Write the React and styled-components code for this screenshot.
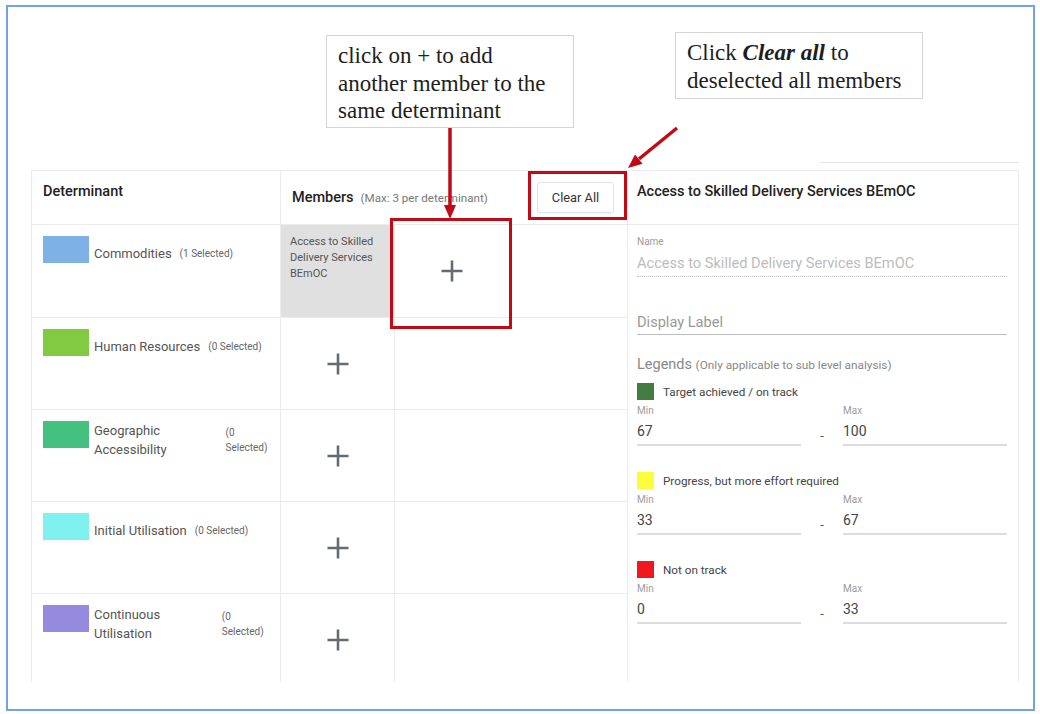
import React from 'react';
import styled, { createGlobalStyle } from 'styled-components';

const GlobalStyle = createGlobalStyle`
    html, body {
        margin: 0;
        padding: 0;
        background: #ffffff;
    }
    body {
        font-family: Roboto, "Liberation Sans", Arial, sans-serif;
        color: #333;
    }
    * {
        box-sizing: border-box;
    }
`;

const AnnotRed = '#c20a16';
const LineGray = '#ebebeb';

const Frame = styled.div`
    position: relative;
    width: 1029px;
    height: 706px;
    margin: 5px 0 0 6px;
    border: 2px solid #72a3da;
    padding: 155px 0 0 23px;
    background: #fff;
`;

const TopRuleRow = styled.div`
    display: flex;
    justify-content: flex-end;
    width: 988px;
    margin-bottom: 7px;
`;

const TopRule = styled.div`
    width: 199px;
    height: 1px;
    background: #e4e4e4;
`;

const Content = styled.div`
    display: flex;
    height: 512px;
    overflow: hidden;
`;

const Table = styled.div`
    width: 596px;
    display: flex;
    flex-direction: column;
    border-left: 1px solid ${LineGray};
    border-top: 1px solid ${LineGray};
`;

const Row = styled.div`
    display: flex;
    flex: 0 0 ${p => p.$h}px;
    border-bottom: 1px solid ${LineGray};
`;

const DetHeader = styled.div`
    width: 249px;
    flex: 0 0 249px;
    padding: 11px 11px 0;
    border-right: 1px solid ${LineGray};
    font-size: 14.5px;
    line-height: 20px;
    font-weight: 500;
    color: #222;
`;

const MembersHeader = styled.div`
    flex: 1;
    display: flex;
    align-items: center;
    padding: 0 13px 0 11px;
`;

const MembersTitle = styled.span`
    font-size: 14.5px;
    font-weight: 500;
    color: #222;
`;

const MembersHint = styled.span`
    margin-left: 7px;
    font-size: 11.6px;
    color: #777;
    flex: 1;
`;

const ClearButton = styled.button`
    width: 77px;
    height: 31px;
    border: 1px solid #e3e3e3;
    border-radius: 3px;
    background: #fff;
    font-family: Roboto, "Liberation Sans", Arial, sans-serif;
    font-size: 12.8px;
    color: #333;
    box-shadow: 0 1px 1px rgba(0, 0, 0, 0.04);
    padding: 0;
`;

const DetCell = styled.div`
    width: 249px;
    flex: 0 0 249px;
    display: flex;
    align-items: flex-start;
    padding: 11px 8px 0 11px;
    border-right: 1px solid ${LineGray};
`;

const Swatch = styled.div`
    width: 46px;
    height: 27px;
    flex: 0 0 46px;
    background: ${p => p.$color};
`;

const DetLabel = styled.div`
    flex: 1;
    min-height: 35px;
    margin-left: 5px;
    display: flex;
    align-items: center;
    gap: 8px;
`;

const DetName = styled.span`
    font-size: 13px;
    line-height: 19px;
    color: #555;
`;

const DetCount = styled.span`
    font-size: 10px;
    line-height: 15px;
    color: #666;
`;

const Slot = styled.div`
    width: 114px;
    flex: 0 0 114px;
    display: flex;
    align-items: ${p => (p.$filled ? 'flex-start' : 'center')};
    justify-content: ${p => (p.$filled ? 'flex-start' : 'center')};
    padding: ${p => (p.$filled ? '9px 9px' : '0')};
    background: ${p => (p.$filled ? '#e0e0e0' : 'transparent')};
    border-right: ${p => (p.$last ? 'none' : `1px solid ${LineGray}`)};
    font-size: 11px;
    line-height: 16px;
    color: #555;
`;

const Filler = styled.div`
    flex: 1;
`;

const Panel = styled.div`
    width: 392px;
    display: flex;
    flex-direction: column;
    border: 1px solid ${LineGray};
    border-bottom: none;
`;

const PanelHeader = styled.div`
    flex: 0 0 54px;
    padding: 11px 9px 0;
    border-bottom: 1px solid ${LineGray};
    font-size: 14.5px;
    line-height: 20px;
    font-weight: 500;
    color: #222;
`;

const PanelBody = styled.div`
    padding: 10px 11px 0 9px;
    display: flex;
    flex-direction: column;
`;

const SmallLabel = styled.div`
    font-size: 10px;
    line-height: 14px;
    color: #9c9c9c;
`;

const NameValue = styled.div`
    margin-top: 4px;
    padding-bottom: 3px;
    border-bottom: 1px dotted #bdbdbd;
    font-size: 14.6px;
    line-height: 20px;
    color: #bcbcbc;
`;

const DisplayLabel = styled.div`
    margin-top: 35px;
    padding-bottom: 2px;
    border-bottom: 1px solid #bdbdbd;
    font-size: 14.6px;
    line-height: 20px;
    color: #999;
`;

const LegendsTitle = styled.div`
    margin-top: 20px;
    font-size: 14.5px;
    line-height: 20px;
    color: #888;

    small {
        font-size: 11.8px;
        color: #888;
    }
`;

const Legend = styled.div`
    margin-top: ${p => (p.$first ? 8 : 26)}px;
`;

const LegendHead = styled.div`
    display: flex;
    align-items: center;
    height: 17px;
    font-size: 11.7px;
    color: #444;
`;

const LegendSwatch = styled.div`
    width: 17px;
    height: 17px;
    margin-right: 9px;
    background: ${p => p.$color};
`;

const RangeRow = styled.div`
    display: flex;
    margin-top: 4px;
`;

const RangeField = styled.div`
    width: 164px;
`;

const RangeValue = styled.div`
    margin-top: 3px;
    padding-bottom: 3px;
    border-bottom: 2px solid #dcdcdc;
    font-size: 14px;
    line-height: 20px;
    color: #444;
`;

const Dash = styled.div`
    width: 42px;
    padding-top: 24px;
    text-align: center;
    font-size: 13px;
    color: #555;
`;

const Callout = styled.div`
    position: absolute;
    left: ${p => p.$x - 8}px;
    top: ${p => p.$y - 7}px;
    width: ${p => p.$w}px;
    height: ${p => p.$h}px;
    padding: 6px 10px 0 11px;
    border: 1px solid #d4d4d4;
    background: #fff;
    font-family: "Liberation Serif", "Times New Roman", serif;
    font-size: 23px;
    line-height: 27.6px;
    color: #1e1e1e;
    white-space: nowrap;
`;

const Highlight = styled.div`
    position: absolute;
    left: ${p => p.$x - 8}px;
    top: ${p => p.$y - 7}px;
    width: ${p => p.$w}px;
    height: ${p => p.$h}px;
    border: 3px solid ${AnnotRed};
    pointer-events: none;
`;

const ArrowLayer = styled.svg`
    position: absolute;
    left: 0;
    top: 0;
    pointer-events: none;
`;

const PlusIcon = () => (
    <svg width="24" height="24" viewBox="0 0 24 24">
        <path d="M12 1.5v21M1.5 12h21" stroke="#646c73" strokeWidth="2.6" fill="none" />
    </svg>
);

const determinants = [
    { name: 'Commodities', count: '(1 Selected)', color: '#7eb1e6', member: 'Access to Skilled Delivery Services BEmOC' },
    { name: 'Human Resources', count: '(0 Selected)', color: '#82ca41' },
    { name: 'Geographic Accessibility', count: '(0 Selected)', color: '#45c17f' },
    { name: 'Initial Utilisation', count: '(0 Selected)', color: '#7ff1ee' },
    { name: 'Continuous Utilisation', count: '(0 Selected)', color: '#958ade' },
];

const legends = [
    { label: 'Target achieved / on track', color: '#437c43', min: '67', max: '100' },
    { label: 'Progress, but more effort required', color: '#fcfc3a', min: '33', max: '67' },
    { label: 'Not on track', color: '#f0171f', min: '0', max: '33' },
];

const App = () => {
    return (
        <>
            <GlobalStyle />
            <Frame>
                <TopRuleRow>
                    <TopRule />
                </TopRuleRow>
                <Content>
                    <Table>
                        <Row $h={54}>
                            <DetHeader>Determinant</DetHeader>
                            <MembersHeader>
                                <MembersTitle>Members</MembersTitle>
                                <MembersHint>(Max: 3 per determinant)</MembersHint>
                                <ClearButton>Clear All</ClearButton>
                            </MembersHeader>
                        </Row>
                        {determinants.map((d, i) => (
                            <Row key={d.name} $h={i === 0 ? 93 : 92}>
                                <DetCell>
                                    <Swatch $color={d.color} />
                                    <DetLabel>
                                        <DetName>{d.name}</DetName>
                                        <DetCount>{d.count}</DetCount>
                                    </DetLabel>
                                </DetCell>
                                {d.member ? (
                                    <>
                                        <Slot $filled>{d.member}</Slot>
                                        <Slot $last>
                                            <PlusIcon />
                                        </Slot>
                                    </>
                                ) : (
                                    <Slot>
                                        <PlusIcon />
                                    </Slot>
                                )}
                                <Filler />
                            </Row>
                        ))}
                    </Table>
                    <Panel>
                        <PanelHeader>Access to Skilled Delivery Services BEmOC</PanelHeader>
                        <PanelBody>
                            <SmallLabel>Name</SmallLabel>
                            <NameValue>Access to Skilled Delivery Services BEmOC</NameValue>
                            <DisplayLabel>Display Label</DisplayLabel>
                            <LegendsTitle>
                                Legends <small>(Only applicable to sub level analysis)</small>
                            </LegendsTitle>
                            {legends.map((l, i) => (
                                <Legend key={l.label} $first={i === 0}>
                                    <LegendHead>
                                        <LegendSwatch $color={l.color} />
                                        {l.label}
                                    </LegendHead>
                                    <RangeRow>
                                        <RangeField>
                                            <SmallLabel>Min</SmallLabel>
                                            <RangeValue>{l.min}</RangeValue>
                                        </RangeField>
                                        <Dash>-</Dash>
                                        <RangeField>
                                            <SmallLabel>Max</SmallLabel>
                                            <RangeValue>{l.max}</RangeValue>
                                        </RangeField>
                                    </RangeRow>
                                </Legend>
                            ))}
                        </PanelBody>
                    </Panel>
                </Content>

                <Callout $x={326} $y={35} $w={248} $h={93}>
                    click on + to add
                    <br />
                    another member to the
                    <br />
                    same determinant
                </Callout>
                <Callout $x={675} $y={32} $w={248} $h={67}>
                    Click <b><i>Clear all</i></b> to
                    <br />
                    deselected all members
                </Callout>

                <Highlight $x={528} $y={171} $w={99} $h={49} />
                <Highlight $x={390} $y={218} $w={122} $h={111} />

                <ArrowLayer width="1025" height="702" viewBox="8 7 1025 702">
                    <line x1="450" y1="128" x2="450" y2="207" stroke={AnnotRed} strokeWidth="3.5" />
                    <polygon points="444,205 456,205 450,219" fill={AnnotRed} />
                    <line x1="677" y1="128" x2="639" y2="159" stroke={AnnotRed} strokeWidth="3.5" />
                    <polygon points="642.6,163.8 635,154.5 628,168" fill={AnnotRed} />
                </ArrowLayer>
            </Frame>
        </>
    );
};

export default App;
